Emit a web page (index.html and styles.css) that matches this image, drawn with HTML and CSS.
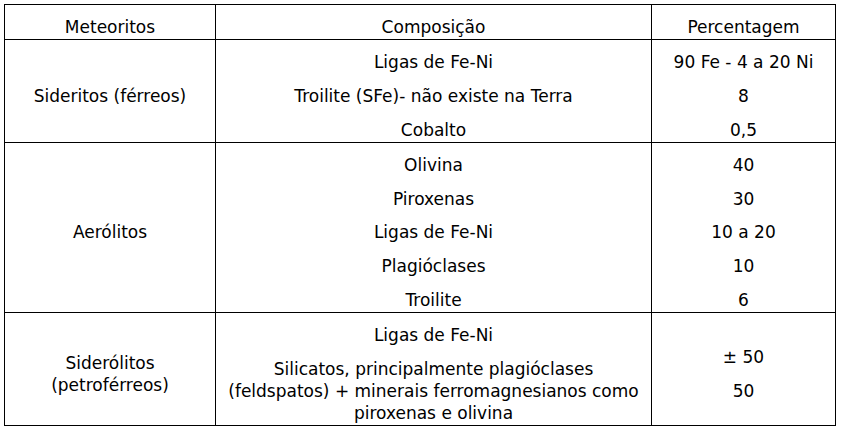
FILE: index.html
```html
<!DOCTYPE html>
<html lang="pt">
<head>
<meta charset="utf-8">
<title>Meteoritos</title>
<link rel="stylesheet" href="styles.css">
</head>
<body>
<div class="page">
<table class="meteor">
  <colgroup>
    <col class="c1"><col class="c2"><col class="c3">
  </colgroup>
  <thead>
    <tr>
      <th><p>Meteoritos</p></th>
      <th><p>Composição</p></th>
      <th><p>Percentagem</p></th>
    </tr>
  </thead>
  <tbody>
    <tr>
      <td><p>Sideritos (férreos)</p></td>
      <td><p>Ligas de Fe-Ni</p><p>Troilite (SFe)- não existe na Terra</p><p>Cobalto</p></td>
      <td><p>90 Fe - 4 a 20 Ni</p><p>8</p><p>0,5</p></td>
    </tr>
    <tr>
      <td><p>Aerólitos</p></td>
      <td><p>Olivina</p><p>Piroxenas</p><p>Ligas de Fe-Ni</p><p>Plagióclases</p><p>Troilite</p></td>
      <td><p>40</p><p>30</p><p>10 a 20</p><p>10</p><p>6</p></td>
    </tr>
    <tr>
      <td><p>Siderólitos<br>(petroférreos)</p></td>
      <td><p>Ligas de Fe-Ni</p><p>Silicatos, principalmente plagióclases<br>(feldspatos) + minerais ferromagnesianos como<br>piroxenas e olivina</p></td>
      <td><p>± 50</p><p>50</p></td>
    </tr>
  </tbody>
</table>
</div>
</body>
</html>
```
FILE: styles.css
```css
html, body {
  margin: 0;
  padding: 0;
  background: #fff;
}
.page {
  padding: 4px 0 0 4px;
}
.meteor {
  border-collapse: collapse;
  table-layout: fixed;
  width: 831px;
  font-family: "DejaVu Sans", Verdana, sans-serif;
  font-size: 17px;
  color: #000;
}
.c1 { width: 211px; }
.c2 { width: 436px; }
.c3 { width: 184px; }
.meteor th,
.meteor td {
  border: 1px solid #000;
  padding: 0;
  text-align: center;
  vertical-align: middle;
  font-weight: normal;
}
.meteor p {
  margin: 12px 0 0;
  line-height: 21.9px;
}
```
